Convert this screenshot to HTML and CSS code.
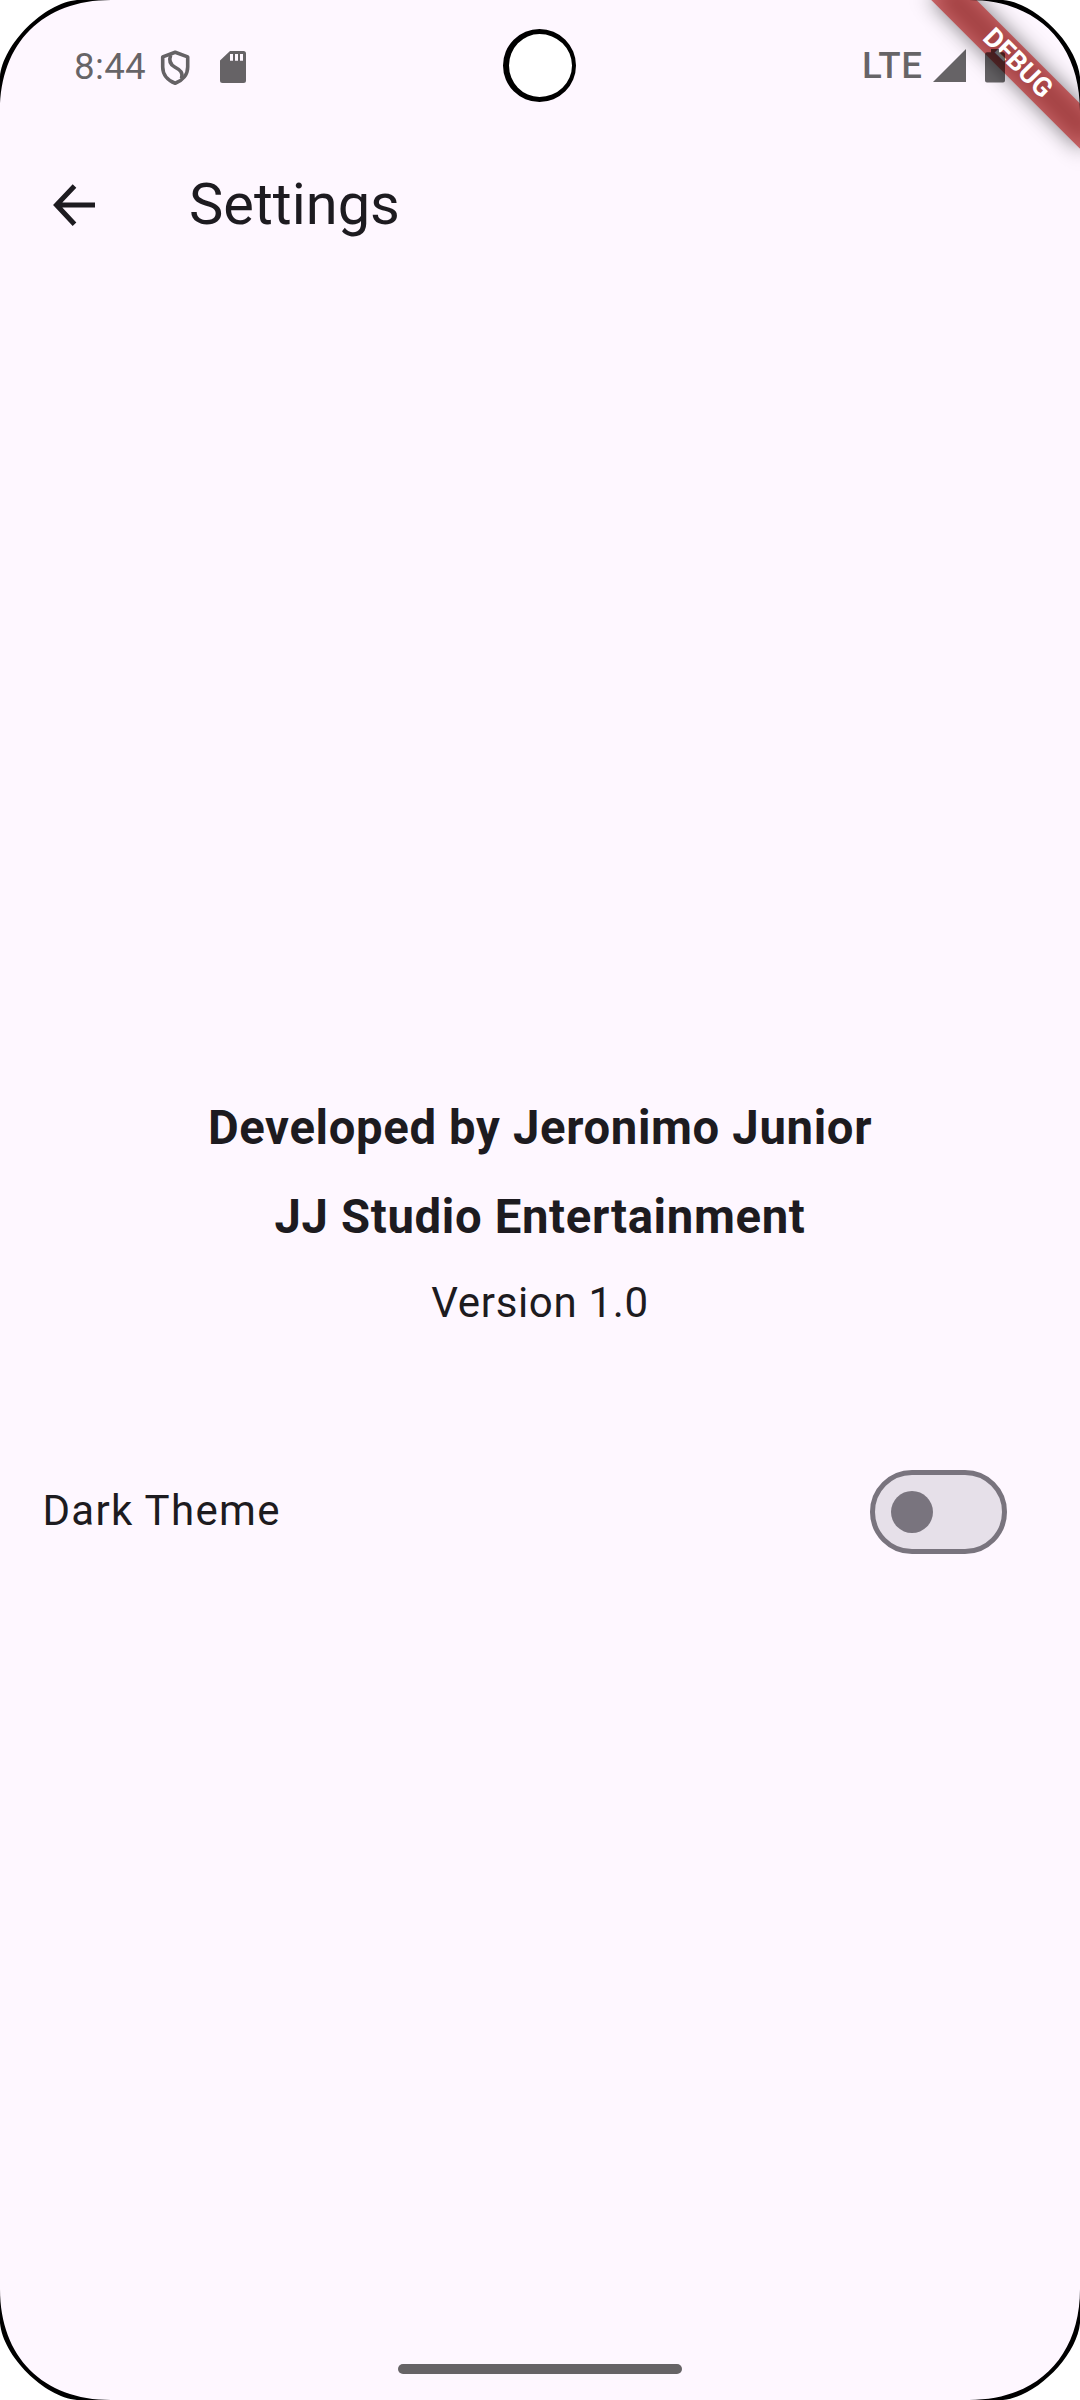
FILE: index.html
```html
<!DOCTYPE html>
<html lang="en">
<head>
<meta charset="utf-8">
<title>Settings</title>
<link rel="stylesheet" href="styles.css">
</head>
<body>
<div class="screen">
  <header class="status-bar">
    <div class="status-group">
      <span class="clock">8:44</span>
      <svg class="icon-shield" width="32" height="38" viewBox="0 0 32 38">
        <path d="M16.200 3.300 L28.700 7.900 V18 C28.700 25.500 23.700 31.500 16.200 34.300 C8.600 31.500 3.700 25.500 3.700 18 V7.900 Z" fill="none" stroke="#000" stroke-width="3.600" stroke-linejoin="round"/>
        <path d="M11.700 6 C9.700 11.500 10.700 15.200 15.700 18 C21.700 21.200 24.200 23.500 22.500 29.500" fill="none" stroke="#000" stroke-width="3.600"/>
      </svg>
      <svg class="icon-sd" width="26" height="32" viewBox="0 0 26 32">
        <path fill="currentColor" fill-rule="evenodd" d="M10 0 H23.500 A2.500 2.500 0 0 1 26 2.500 V29.500 A2.500 2.500 0 0 1 23.500 32 H2.500 A2.500 2.500 0 0 1 0 29.500 V9.500 Z M10 3 V9.700 H13 V3 Z M15 3 V9.700 H18 V3 Z M20 3 V9.700 H23 V3 Z"/>
      </svg>
    </div>
    <div class="status-group">
      <span class="network">LTE</span>
      <svg class="icon-signal" width="33" height="33" viewBox="0 0 33 33"><path fill="currentColor" d="M33 0 V33 H0 Z"/></svg>
      <svg class="icon-battery" width="20" height="34" viewBox="0 0 20 34"><path fill="currentColor" d="M6 0 H14 V3.300 H18 A2 2 0 0 1 20 5.300 V31.500 A2 2 0 0 1 18 33.500 H2 A2 2 0 0 1 0 31.500 V5.300 A2 2 0 0 1 2 3.300 H6 Z"/></svg>
    </div>
    <div class="camera"></div>
  </header>

  <nav class="app-bar">
    <svg class="icon-back" width="42" height="42" viewBox="0 0 42 42"><path d="M21.500 2 L3.500 21 L21.500 40.300 M3.500 21.100 H42" fill="none" stroke="currentColor" stroke-width="5"/></svg>
    <h1 class="title">Settings</h1>
  </nav>

  <main class="content">
    <p class="credit">Developed by Jeronimo Junior</p>
    <p class="credit">JJ Studio Entertainment</p>
    <p class="version">Version 1.0</p>
    <div class="setting">
      <span class="setting-label">Dark Theme</span>
      <span class="switch" role="switch" aria-checked="false"><span class="thumb"></span></span>
    </div>
  </main>

  <footer class="gesture-area"><div class="gesture-bar"></div></footer>

  <div class="banner-shadow"></div>
  <div class="banner">DEBUG</div>

  <svg class="corners" width="1080" height="2400" viewBox="0 0 1080 2400">
    <defs>
      <g id="corner">
        <path d="M0 0 V111 C0 43 43 0 111 0 Z" fill="#000"/>
        <path d="M0 0 V77 C3 44 44 3 77 0 Z" fill="#fff"/>
      </g>
    </defs>
    <use href="#corner"/>
    <use href="#corner" transform="translate(1080 0) scale(-1 1)"/>
    <use href="#corner" transform="translate(0 2400) scale(1 -1)"/>
    <use href="#corner" transform="translate(1080 2400) scale(-1 -1)"/>
  </svg>
</div>
</body>
</html>
```
FILE: styles.css
```css
* { box-sizing: border-box; }

body {
  margin: 0;
  background: #fff;
  font-family: Roboto, sans-serif;
  color: #1d1b20;
}

.screen {
  position: relative;
  display: flex;
  flex-direction: column;
  width: 1080px;
  height: 2400px;
  overflow: hidden;
  background: #fef7ff;
}

.status-bar {
  position: relative;
  z-index: 2;
  display: flex;
  justify-content: space-between;
  height: 131px;
  padding: 0 75px 0 74px;
  color: rgba(0, 0, 0, 0.6);
}

.status-group {
  display: flex;
  align-items: center;
}

.clock,
.network {
  font-size: 36.75px;
  line-height: 44px;
}

.clock {
  margin-top: 2px;
  letter-spacing: 0.3px;
}

.network {
  font-weight: 500;
  letter-spacing: 0.7px;
}

.icon-shield {
  margin: 4px 0 0 13px;
  opacity: 0.6;
}

.icon-sd { margin: 3px 0 0 29px; }
.icon-signal { margin-left: 10.300px; }
.icon-battery { margin-left: 19px; }

.camera {
  position: absolute;
  left: 503px;
  top: 29px;
  width: 73px;
  height: 73px;
  border: 5px solid #000;
  border-left-width: 6px;
  border-right-width: 4px;
  border-radius: 50%;
  background: #fff;
}

.app-bar {
  display: flex;
  align-items: center;
  height: 147px;
  padding-left: 53px;
}

.icon-back { margin-top: 1px; }

.title {
  margin: 0 0 2px 94px;
  font-size: 57.75px;
  font-weight: 400;
  line-height: 74px;
}

.content {
  flex: 1;
  padding-top: 815.500px;
  text-align: center;
}

.credit,
.version {
  margin: 0;
  letter-spacing: 0.656px;
}

.credit {
  margin-bottom: 21px;
  font-size: 47.25px;
  font-weight: 700;
  line-height: 68px;
}

.version {
  font-size: 42px;
  line-height: 61px;
}

.setting {
  display: flex;
  align-items: center;
  justify-content: space-between;
  height: 147px;
  margin-top: 105.500px;
  padding: 0 73.500px 0 42.500px;
}

.setting-label {
  margin-bottom: 2px;
  font-size: 42px;
  line-height: 63px;
  letter-spacing: 1.312px;
}

.switch {
  display: flex;
  align-items: center;
  width: 136.500px;
  height: 84px;
  padding-left: 15.750px;
  border: 5.250px solid #79747e;
  border-radius: 42px;
  background: #e6e0e9;
}

.thumb {
  width: 42px;
  height: 42px;
  border-radius: 50%;
  background: #79747e;
}

.gesture-area {
  display: flex;
  justify-content: center;
  height: 36px;
}

.gesture-bar {
  width: 284px;
  height: 10px;
  border-radius: 5px;
  background: #666366;
}

.banner,
.banner-shadow {
  position: absolute;
  left: 912px;
  top: 46.750px;
  width: 210px;
  height: 31.500px;
  transform: rotate(45deg);
}

.banner-shadow {
  background: rgba(0, 0, 0, 0.5);
  filter: blur(10.400px);
}

.banner {
  padding-left: 1.500px;
  background: rgba(183, 28, 28, 0.627);
  color: #fff;
  font-size: 26.775px;
  font-weight: 700;
  line-height: 31.500px;
  text-align: center;
}

.corners {
  position: absolute;
  left: 0;
  top: 0;
  z-index: 3;
}
```
